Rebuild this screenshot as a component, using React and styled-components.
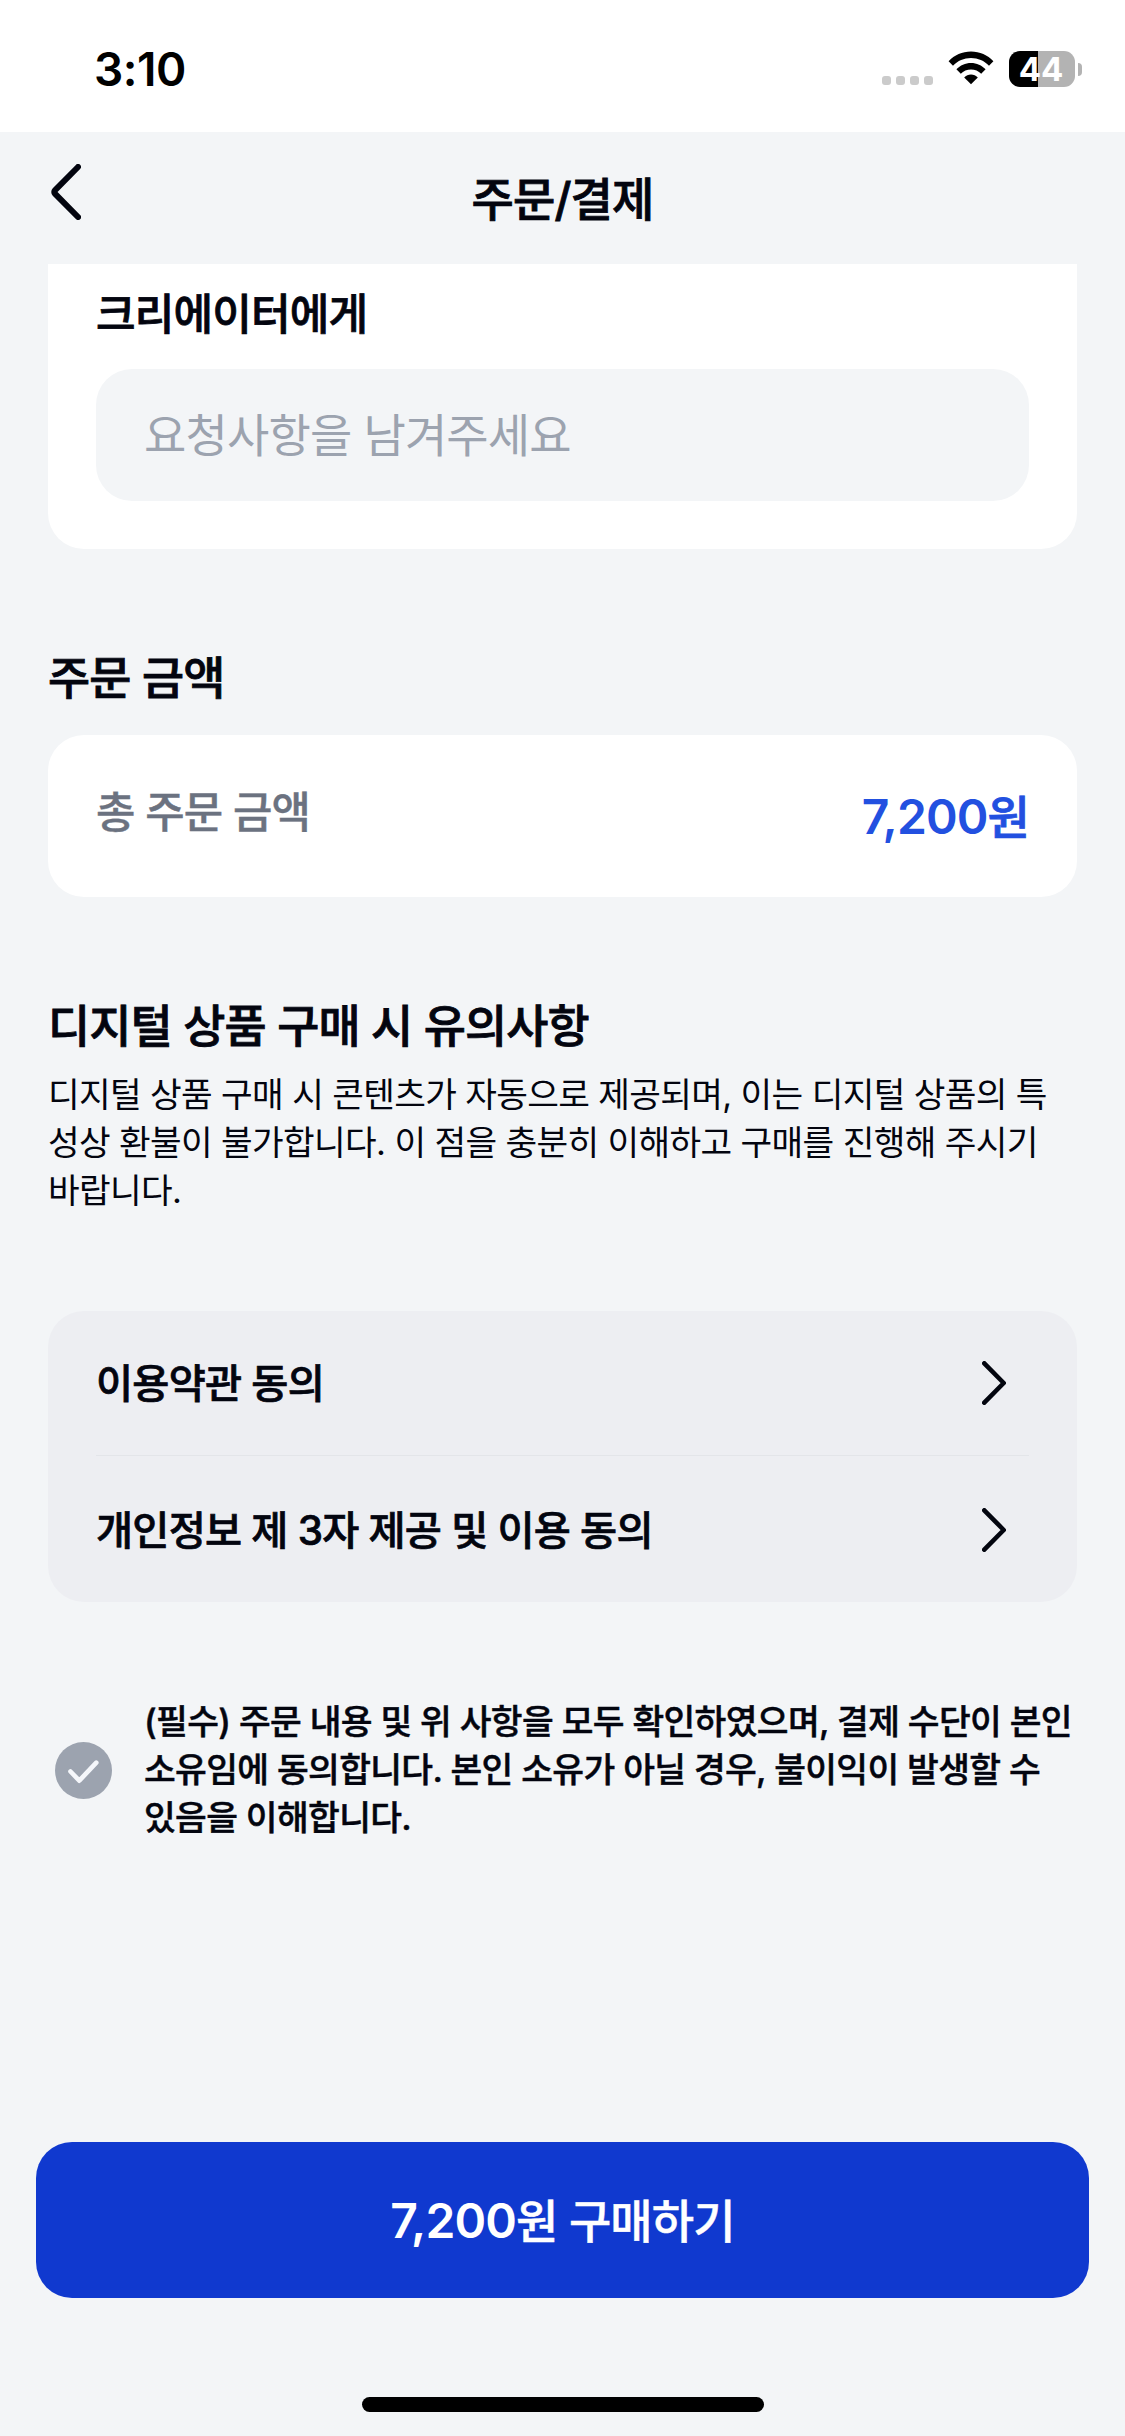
import React from "react";
import styled, { createGlobalStyle } from "styled-components";

const terms = ["이용약관 동의", "개인정보 제 3자 제공 및 이용 동의"];

const App = () => {
	return (
		<Screen>
			<GlobalStyle />
			<StatusBar>
				<Clock>3:10</Clock>
				<StatusIcons>
					<SignalDots>
						<Dot />
						<Dot />
						<Dot />
						<Dot />
					</SignalDots>
					<WifiIcon />
					<Battery>
						<BatteryBody>44</BatteryBody>
						<BatteryTip />
					</Battery>
				</StatusIcons>
			</StatusBar>

			<Header>
				<BackButton aria-label="뒤로">
					<BackIcon />
				</BackButton>
				<HeaderTitle>주문/결제</HeaderTitle>
			</Header>

			<Content>
				<RequestCard>
					<RequestLabel>크리에이터에게</RequestLabel>
					<RequestField>요청사항을 남겨주세요</RequestField>
				</RequestCard>

				<SectionTitle>주문 금액</SectionTitle>
				<AmountCard>
					<AmountLabel>총 주문 금액</AmountLabel>
					<AmountValue>
						<Digits>7,200</Digits>원
					</AmountValue>
				</AmountCard>

				<NoticeTitle>디지털 상품 구매 시 유의사항</NoticeTitle>
				<NoticeText>
					디지털 상품 구매 시 콘텐츠가 자동으로 제공되며, 이는 디지털 상품의 특
					<br />
					성상 환불이 불가합니다. 이 점을 충분히 이해하고 구매를 진행해 주시기
					<br />
					바랍니다.
				</NoticeText>

				<TermsCard>
					{terms.map((term) => (
						<TermRow key={term}>
							<TermName>{term}</TermName>
							<ChevronIcon />
						</TermRow>
					))}
				</TermsCard>

				<Agreement>
					<CheckIcon />
					<AgreementText>
						(필수) 주문 내용 및 위 사항을 모두 확인하였으며, 결제 수단이 본인
						<br />
						소유임에 동의합니다. 본인 소유가 아닐 경우, 불이익이 발생할 수
						<br />
						있음을 이해합니다.
					</AgreementText>
				</Agreement>
			</Content>

			<Footer>
				<BuyButton>
					<Digits>7,200</Digits>원 구매하기
				</BuyButton>
				<HomeBar />
			</Footer>
		</Screen>
	);
};

export default App;

const WifiIcon = () => (
	<svg width="46" height="34" viewBox="0 0 46 34">
		<path
			d="M0.6 10.2C6.4 4 14.2 0.5 23 0.5s16.6 3.5 22.4 9.7l-4.4 4.5C36.3 9.8 30 7 23 7S9.7 9.8 5 14.7z"
			fill="#000"
		/>
		<path
			d="M8.4 18.2C12.2 14.2 17.3 11.9 23 11.9s10.8 2.3 14.6 6.3l-4.4 4.5c-2.7-2.8-6.2-4.3-10.2-4.3s-7.5 1.5-10.2 4.3z"
			fill="#000"
		/>
		<path
			d="M16.2 26.4c1.8-1.9 4.2-2.9 6.8-2.9s5 1 6.8 2.9L23 33.3z"
			fill="#000"
		/>
	</svg>
);

const BackIcon = () => (
	<svg width="30" height="56" viewBox="0 0 30 56">
		<path
			d="M27 3L3.9 26.4a2.3 2.3 0 0 0 0 3.2L27 53"
			fill="none"
			stroke="#03050f"
			strokeWidth="6"
			strokeLinecap="round"
			strokeLinejoin="round"
		/>
	</svg>
);

const ChevronIcon = () => (
	<svg width="24" height="44" viewBox="0 0 24 44">
		<path
			d="M2.3 2.3L21.7 22 2.3 41.7"
			fill="none"
			stroke="#03050f"
			strokeWidth="4.6"
			strokeLinecap="round"
			strokeLinejoin="round"
		/>
	</svg>
);

const CheckIcon = () => (
	<svg width="57" height="57" viewBox="0 0 57 57">
		<circle cx="28.5" cy="28.5" r="28.5" fill="#9ca3af" />
		<path
			d="M15.5 29.5l8.8 9.2 17-18"
			fill="none"
			stroke="#f5f7fb"
			strokeWidth="4.6"
			strokeLinecap="round"
			strokeLinejoin="round"
		/>
	</svg>
);

const GlobalStyle = createGlobalStyle`
	* {
		box-sizing: border-box;
		letter-spacing: -0.0185em;
	}
	body {
		margin: 0;
		background: #f3f5f7;
	}
	button {
		margin: 0;
		padding: 0;
		border: 0;
		background: none;
		font: inherit;
		color: inherit;
	}
	svg {
		display: block;
		flex: none;
	}
`;

const Screen = styled.div`
	display: flex;
	flex-direction: column;
	width: 1125px;
	height: 2436px;
	overflow: hidden;
	background: #f3f5f7;
	color: #03050f;
	font-family: Inter, "Noto Sans CJK KR", sans-serif;
	white-space: nowrap;
`;

// iOS status bar
const StatusBar = styled.div`
	display: flex;
	justify-content: space-between;
	height: 132px;
	padding: 51px 43px 0 94px;
	background: #fff;
`;

const Clock = styled.div`
	height: 36px;
	font-size: 46px;
	line-height: 36px;
	font-weight: 600;
	letter-spacing: -0.5px;
	color: #000;
`;

const StatusIcons = styled.div`
	display: flex;
	height: 36px;
	gap: 15px;
`;

const SignalDots = styled.div`
	display: flex;
	align-items: flex-end;
	gap: 5px;
	padding-bottom: 2px;
`;

const Dot = styled.i`
	width: 9px;
	height: 9px;
	border-radius: 3px;
	background: #cbcbcb;
`;

const Battery = styled.div`
	display: flex;
	align-items: center;
	gap: 3px;
`;

const BatteryBody = styled.div`
	width: 66px;
	height: 36px;
	padding-right: 2px;
	border-radius: 11px;
	background: linear-gradient(to right, #000 29px, #b3b3b3 29px);
	color: #fff;
	font-size: 33px;
	line-height: 36px;
	font-weight: 700;
	letter-spacing: 0;
	text-align: center;
`;

const BatteryTip = styled.i`
	width: 4px;
	height: 13px;
	border-radius: 0 4px 4px 0;
	background: #b3b3b3;
`;

const Header = styled.header`
	display: grid;
	grid-template-columns: 1fr auto 1fr;
	height: 132px;
	padding: 32px 51px 0;
`;

const BackButton = styled.button`
	width: 30px;
	height: 56px;
`;

// Hangul jumps from medium to bold, a thin stroke gives the semibold between
const HeaderTitle = styled.h1`
	margin: 5px 0 0;
	font-size: 46px;
	line-height: 60px;
	font-weight: 500;
	-webkit-text-stroke: 0.018em;
`;

const Content = styled.main`
	padding: 0 48px;
`;

const RequestCard = styled.section`
	padding: 20px 48px 48px;
	border-radius: 0 0 36px 36px;
	background: #fff;
`;

const RequestLabel = styled.div`
	margin-bottom: 25px;
	font-size: 43px;
	line-height: 60px;
	font-weight: 500;
	-webkit-text-stroke: 0.018em;
`;

const RequestField = styled.div`
	height: 132px;
	padding: 0 48px;
	border-radius: 36px;
	background: #f3f5f7;
	color: #9ca3af;
	font-size: 46px;
	line-height: 133px;
`;

const SectionTitle = styled.h2`
	margin: 100px 0 26px;
	font-size: 45.8px;
	line-height: 60px;
	font-weight: 500;
	-webkit-text-stroke: 0.018em;
`;

const AmountCard = styled.section`
	display: flex;
	justify-content: space-between;
	height: 162px;
	padding: 48px 48px 0;
	border-radius: 36px;
	background: #fff;
	line-height: 60px;
`;

const AmountLabel = styled.div`
	color: #6b7280;
	font-size: 42.8px;
	font-weight: 500;
	-webkit-text-stroke: 0.01em;
`;

const AmountValue = styled.div`
	margin-top: 4px;
	color: #2250e0;
	font-size: 46px;
	font-weight: 500;
	-webkit-text-stroke: 0.018em;
`;

// Latin figures stand slightly larger than the hangul beside them
const Digits = styled.span`
	font-size: 48px;
	font-weight: 600;
	-webkit-text-stroke: 0;
`;

const NoticeTitle = styled(SectionTitle)`
	margin-bottom: 14px;
`;

const NoticeText = styled.p`
	margin: 0;
	font-size: 34.4px;
	line-height: 48px;
`;

const TermsCard = styled.section`
	margin-top: 96px;
	padding: 0 48px;
	border-radius: 36px;
	background: #edeef2;
`;

const TermRow = styled.div`
	display: flex;
	align-items: center;
	justify-content: space-between;
	height: 144px;
	padding-right: 23px;

	& + & {
		height: 147px;
		padding-top: 2px;
		border-top: 1px solid #e3e5e9;
	}
`;

const TermName = styled.span`
	padding-top: 2px;
	font-size: 40.3px;
	line-height: 60px;
	font-weight: 500;
	-webkit-text-stroke: 0.018em;
`;

const Agreement = styled.div`
	display: flex;
	align-items: center;
	gap: 32px;
	margin-top: 96px;
	padding-left: 7px;
`;

const AgreementText = styled.p`
	margin: 0;
	font-size: 34.5px;
	line-height: 48px;
	font-weight: 500;
	-webkit-text-stroke: 0.014em;
`;

const Footer = styled.footer`
	display: flex;
	flex-direction: column;
	align-items: center;
	margin-top: auto;
	padding: 0 36px 24px;
`;

const BuyButton = styled.button`
	width: 100%;
	height: 156px;
	padding-top: 2px;
	border-radius: 36px;
	background: #1039cf;
	color: #fff;
	font-size: 46px;
	line-height: 60px;
	font-weight: 500;
	-webkit-text-stroke: 0.01em;
`;

const HomeBar = styled.div`
	width: 402px;
	height: 15px;
	margin-top: 99px;
	border-radius: 8px;
	background: #000;
`;
